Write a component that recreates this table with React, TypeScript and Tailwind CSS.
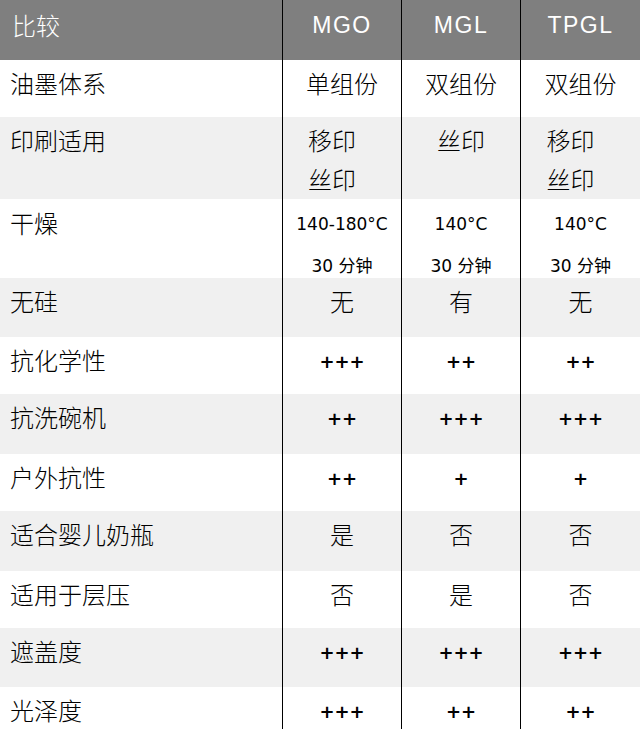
const rows = [
  { label: "油墨体系", h: "h-[57px]", cells: ["单组份", "双组份", "双组份"] },
  { label: "印刷适用", h: "h-[82px]", cells: [["移印", "丝印"], ["丝印"], ["移印", "丝印"]] },
  { label: "干燥", h: "h-[79px]", dry: true, cells: ["140-180°C", "140°C", "140°C"] },
  { label: "无硅", h: "h-[59px]", cells: ["无", "有", "无"] },
  { label: "抗化学性", h: "h-[57px]", plus: true, cells: ["+++", "++", "++"] },
  { label: "抗洗碗机", h: "h-[60px]", plus: true, cells: ["++", "+++", "+++"] },
  { label: "户外抗性", h: "h-[57px]", plus: true, cells: ["++", "+", "+"] },
  { label: "适合婴儿奶瓶", h: "h-[60px]", cells: ["是", "否", "否"] },
  { label: "适用于层压", h: "h-[57px]", cells: ["否", "是", "否"] },
  { label: "遮盖度", h: "h-[59px]", plus: true, cells: ["+++", "+++", "+++"] },
  { label: "光泽度", h: "h-[42px]", plus: true, cells: ["+++", "++", "++"] },
];

const cjk = "font-light [font-family:'Noto_Sans_CJK_SC',sans-serif]";

function Cell({ row, value }: { row: (typeof rows)[number]; value: string | string[] }) {
  if (row.dry) {
    return (
      <div className="flex flex-col items-center pt-[4px] text-[17px] leading-[42px] text-black [font-family:'DejaVu_Sans','Noto_Sans_CJK_SC',sans-serif]">
        <span>{value}</span>
        <span>30 分钟</span>
      </div>
    );
  }
  if (row.plus) {
    return (
      <div className="pt-[5px] text-center text-[18px] font-bold leading-[39px] text-black [font-family:'DejaVu_Sans',sans-serif]">
        {value}
      </div>
    );
  }
  if (Array.isArray(value)) {
    return (
      <div className={`flex flex-col items-center pt-[3px] text-[24px] leading-[39px] text-black ${value.length > 1 ? "pr-5" : ""} ${cjk}`}>
        {value.map((v) => (
          <span key={v}>{v}</span>
        ))}
      </div>
    );
  }
  return <div className={`pt-[3px] text-center text-[24px] leading-[39px] text-black ${cjk}`}>{value}</div>;
}

export default function App() {
  return (
    <div className="h-[743px] w-[640px] bg-white">
      <div className="grid grid-cols-[282px_119px_119px_120px]">
        {/* header */}
        <div className={`flex h-[60px] items-center bg-[#7f7f7f] pl-[12px] pb-[10px] text-[24px] text-white ${cjk}`}>比较</div>
        {["MGO", "MGL", "TPGL"].map((name) => (
          <div
            key={name}
            className="flex h-[60px] items-center justify-center border-l border-black bg-[#7f7f7f] pb-[10px] text-[23px] tracking-[1.5px] text-white [font-family:'Liberation_Sans',Arial,sans-serif]"
          >
            {name}
          </div>
        ))}

        {rows.map((row, i) => {
          const bg = i % 2 === 1 ? "bg-[#f0f0f0]" : "bg-white";
          return (
            <div key={row.label} className="contents">
              <div className={`${row.h} ${bg} pl-[10px] ${row.dry ? "pt-[4px]" : "pt-[3px]"} text-[24px] leading-[39px] text-black ${cjk}`}>
                {row.label}
              </div>
              {row.cells.map((c, j) => (
                <div key={j} className={`${row.h} ${bg} border-l border-black`}>
                  <Cell row={row} value={c} />
                </div>
              ))}
            </div>
          );
        })}
      </div>
    </div>
  );
}
